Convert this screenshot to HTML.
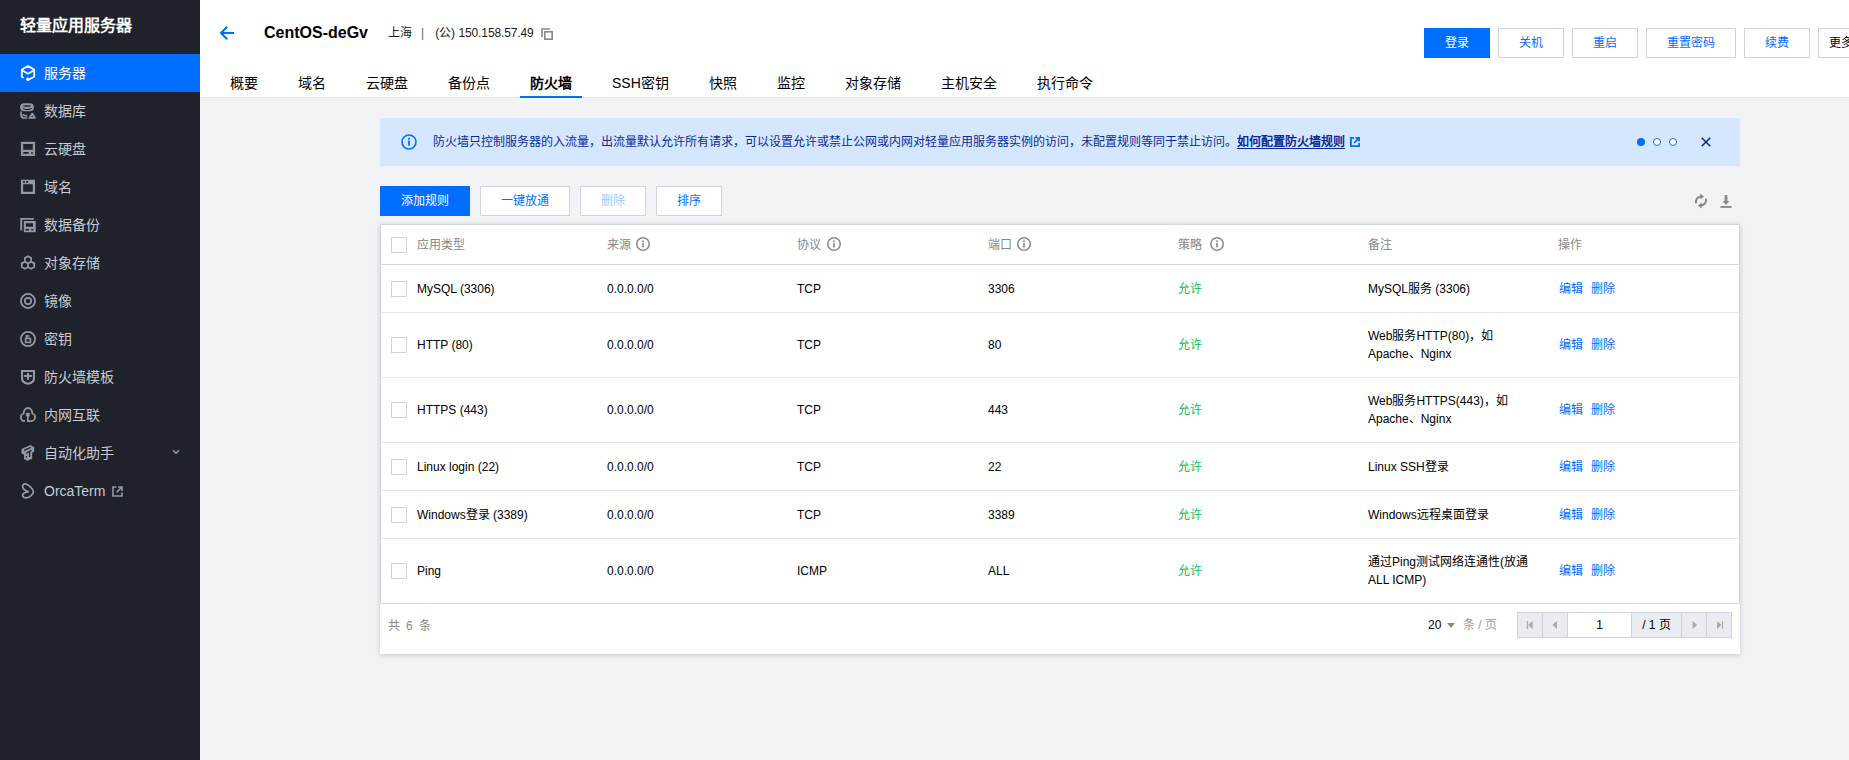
<!DOCTYPE html>
<html lang="zh-CN"><head><meta charset="utf-8">
<style>
*{box-sizing:border-box;margin:0;padding:0}
html,body{width:1849px;height:760px;overflow:hidden}
body{position:relative;background:#f2f3f7;font-family:"Liberation Sans",sans-serif;font-size:12px;color:#000}
.abs{position:absolute}
/* sidebar */
.side{position:absolute;left:0;top:0;width:200px;height:760px;background:#1f222b}
.side .ttl{position:absolute;left:20px;top:15px;font-size:16px;font-weight:bold;color:#fff;line-height:22px;white-space:nowrap}
.mi{position:absolute;left:0;width:200px;height:38px;color:#c8cbd2;font-size:14px;line-height:38px;white-space:nowrap}
.mi .ic{position:absolute;left:20px;top:11px;width:16px;height:16px}
.mi .tx{position:absolute;left:44px;top:0}
.mi.on{background:#006eff;color:#fff}
/* header */
.hdr{position:absolute;left:200px;top:0;width:1649px;height:98px;background:#fff;border-bottom:1px solid #e3e6eb}
.tabs{position:absolute;left:20px;top:72px;height:26px;padding-top:1px;white-space:nowrap;font-size:14px}
.tab{display:inline-block;padding:0 10px;margin-right:20px;height:25px;line-height:21px;vertical-align:top;color:#000;position:relative}
.tab.on{font-weight:bold}
.tab.on:after{content:"";position:absolute;left:0;right:0;bottom:0;height:2px;background:#006eff}
.btn{position:absolute;top:28px;height:30px;border:1px solid #cfd5de;background:#fff;color:#006eff;font-size:12px;line-height:28px;text-align:center;white-space:nowrap}
.btn.pri{background:#006eff;border-color:#006eff;color:#fff}
/* alert */
.alert{position:absolute;left:380px;top:118px;width:1360px;height:48px;background:#d5e7ff;color:#0a2b9c;white-space:nowrap}
/* toolbar */
.tb{position:absolute;top:186px;height:30px;border:1px solid #cfd5de;background:#fff;color:#006eff;font-size:12px;line-height:28px;text-align:center;white-space:nowrap}
.tb.pri{background:#006eff;border-color:#006eff;color:#fff}
/* table */
.card{position:absolute;left:380px;top:224px;width:1360px;height:430px;background:#fff;box-shadow:0 1px 5px 0 rgba(0,0,0,.2)}
.tbl{position:absolute;left:0;top:0;width:1360px;height:380px}
.tbd{position:absolute;left:0;top:0;width:1360px;height:380px;border:1px solid #d5dae2}
.info{position:absolute;width:14px;height:14px}
.hl.hd{background:#d5dae2}
.hl{position:absolute;left:0;width:1360px;height:1px;background:#e5e8ee}
.cb{position:absolute;left:11px;width:16px;height:16px;border:1px solid #cfd5de;background:#fff}
.cell{position:absolute;white-space:nowrap;line-height:18px}
.th{color:#888;top:9px}
.g{color:#0abf5b}
.lk{color:#006eff}
.pg{position:absolute;left:1137px;top:388px;width:215px;height:26px}
.pb{position:absolute;top:0;height:26px;background:#e9ecf1;border:1px solid #cfd5de}
.pin{position:absolute;top:0;height:26px;background:#fff;border:1px solid #cfd5de;text-align:center;line-height:24px}
</style></head><body>

<div class="side">
  <div class="ttl">轻量应用服务器</div>
  <div class="mi on" style="top:54px"><svg class="ic" viewBox="0 0 16 16"><path d="M3.6 12.7 L1.8 11.8 V4.6 L8 1 L14.2 4.6 V11.8 L8 15" fill="none" stroke="#fff" stroke-width="1.8" stroke-linejoin="round"/><path d="M2 5.3 L8 8.7 L14 5.3" fill="none" stroke="#fff" stroke-width="1.8" stroke-linejoin="round"/><circle cx="7.9" cy="14.2" r="1.8" fill="#fff"/></svg><span class="tx">服务器</span></div>
  <div class="mi" style="top:92px"><svg class="ic" viewBox="0 0 16 16"><path fill-rule="evenodd" fill="#9399a2" d="M4 0.3 H10 A3.9 4 0 0 1 10 8.3 H4 A3.9 4 0 0 1 4 0.3 Z M7 2.2 A4.2 0.8 0 1 0 7 3.8 A4.2 0.8 0 1 0 7 2.2 Z M2.5 5.1 Q7.3 6.9 12.1 5.1 Q12 6.2 10.6 6.6 Q7.3 7.6 4 6.6 Q2.6 6.2 2.5 5.1 Z"/><path d="M1.1 8.6 V12.2 Q1.1 15 4.6 15 H7.3 M2.6 11.6 Q4.4 12.8 7.3 12.8" fill="none" stroke="#9399a2" stroke-width="1.7"/><path d="M12.2 10.6 L15 14.9 H9.4 Z" fill="none" stroke="#9399a2" stroke-width="1.8" stroke-linejoin="round"/></svg><span class="tx">数据库</span></div>
  <div class="mi" style="top:130px"><svg class="ic" viewBox="0 0 16 16"><path fill-rule="evenodd" fill="#9399a2" d="M0.9 0.8 H15.1 V14.9 H0.9 Z M3.2 3.1 V8.7 H12.8 V3.1 Z M3.2 11 V12.8 H8.7 V11 Z M11.2 11 V12.8 H12.8 V11 Z"/></svg><span class="tx">云硬盘</span></div>
  <div class="mi" style="top:168px"><svg class="ic" viewBox="0 0 16 16"><path fill-rule="evenodd" fill="#9399a2" d="M0.9 0.8 H15.1 V14.9 H0.9 Z M3.2 5.2 V12.8 H12.8 V5.2 Z M3.1 2 V3.8 H4.9 V2 Z M6.2 2 V3.8 H8 V2 Z"/></svg><span class="tx">域名</span></div>
  <div class="mi" style="top:206px"><svg class="ic" viewBox="0 0 16 16"><path fill="#9399a2" d="M0.3 1 H13.8 V2.8 H2.2 V13.6 H0.3 Z"/><rect x="2.9" y="3" width="13.5" height="13" fill="#1f222b"/><path fill-rule="evenodd" fill="#9399a2" d="M3.8 3.9 H15.7 V15.2 H3.8 Z M5.8 6.3 V9.7 H13 V6.3 Z M5.4 12 V13.5 H9.1 V12 Z M11.3 12 V13.5 H13.3 V12 Z"/></svg><span class="tx">数据备份</span></div>
  <div class="mi" style="top:244px"><svg class="ic" viewBox="0 0 16 16"><path d="M8.00 1.20 L11.12 3.00 L11.12 6.60 L8.00 8.40 L4.88 6.60 L4.88 3.00 Z M4.88 6.60 L8.00 8.40 L8.00 12.00 L4.88 13.80 L1.76 12.00 L1.76 8.40 Z M11.12 6.60 L14.24 8.40 L14.24 12.00 L11.12 13.80 L8.00 12.00 L8.00 8.40 Z" fill="none" stroke="#9399a2" stroke-width="1.8" stroke-linejoin="round"/></svg><span class="tx">对象存储</span></div>
  <div class="mi" style="top:282px"><svg class="ic" viewBox="0 0 16 16"><circle cx="8" cy="8" r="7.05" fill="none" stroke="#9399a2" stroke-width="1.8"/><circle cx="8" cy="8" r="3.2" fill="none" stroke="#9399a2" stroke-width="1.7"/></svg><span class="tx">镜像</span></div>
  <div class="mi" style="top:320px"><svg class="ic" viewBox="0 0 16 16"><circle cx="8" cy="8" r="7.1" fill="none" stroke="#9399a2" stroke-width="1.8"/><rect x="5.8" y="4.2" width="1.7" height="3.2" fill="#9399a2"/><rect x="5.8" y="4.2" width="3.8" height="1.5" fill="#9399a2"/><rect x="5.6" y="7.4" width="4.8" height="4" fill="none" stroke="#9399a2" stroke-width="1.6"/></svg><span class="tx">密钥</span></div>
  <div class="mi" style="top:358px"><svg class="ic" viewBox="0 0 16 16"><path d="M2 2 H14 V9.3 C14 12.3 11.2 14.2 8 14.8 C4.8 14.2 2 12.3 2 9.3 Z" fill="none" stroke="#9399a2" stroke-width="2.1"/><rect x="3.9" y="6" width="8.1" height="1.9" fill="#9399a2"/><rect x="6.9" y="3.9" width="2.2" height="6.8" fill="#9399a2"/></svg><span class="tx">防火墙模板</span></div>
  <div class="mi" style="top:396px"><svg class="ic" viewBox="0 0 16 16"><path d="M5 14.1 C2.5 14 0.9 12.3 0.9 10.2 C0.9 8.4 2 7 3.6 6.5 C3.8 3.4 5.7 1 8 1 C10.3 1 12.2 3.4 12.4 6.5 C14 7 15.1 8.4 15.1 10.2 C15.1 12.3 13.4 14.1 11.2 14.1 H7.85 V9" fill="none" stroke="#9399a2" stroke-width="1.8"/><rect x="6" y="5.8" width="3.7" height="3.6" fill="#9399a2"/></svg><span class="tx">内网互联</span></div>
  <div class="mi" style="top:434px"><svg class="ic" viewBox="0 0 16 16"><path d="M1.5 4 L10.4 0 L14.2 2.2 V6.5 L12.2 7.7 V13.8 L7.5 15.8 L4 14 V9.7 L1.5 8.6 Z" fill="#9399a2"/><path d="M4.2 5.4 L10.7 2.4 M6.1 8.3 L11.6 5.4 M9.6 6.6 V12 M6.4 10.9 V12.6" fill="none" stroke="#1f222b" stroke-width="1.2"/></svg><span class="tx">自动化助手</span><svg class="abs" style="left:172px;top:15px;width:8px;height:6px" viewBox="0 0 8 6"><path d="M1 1.2 L4 4.2 L7 1.2" fill="none" stroke="#9aa0a8" stroke-width="1.4"/></svg></div>
  <div class="mi" style="top:472px"><svg class="ic" viewBox="0 0 16 16"><path d="M9 9 C6 8 2.6 6.5 2.6 3.6 C2.6 1.6 4.2 0.8 5.6 0.9 C8 1.2 13.4 6 13.4 8.8 C13.4 11.2 9.6 14.6 6.4 14.8 C4.2 15 2.6 14 2.6 12.2 C2.6 10.2 5 9.2 8.6 8.8" fill="none" stroke="#9399a2" stroke-width="1.8"/></svg><span class="tx">OrcaTerm</span><svg class="abs" style="left:112px;top:14px;width:11px;height:11px" viewBox="0 0 11 11"><path d="M4.5 1 H1 V10 H10 V6.5" fill="none" stroke="#9399a2" stroke-width="1.6"/><path d="M6 1 H10 V5 M10 1 L4.6 6.4" fill="none" stroke="#9399a2" stroke-width="1.6"/></svg></div>
</div>

<div class="hdr">
  <svg class="abs" style="left:19px;top:25px;width:16px;height:16px" viewBox="0 0 16 16"><path d="M8.2 1.8 L2 8 L8.2 14.2 M2.2 8 H15" fill="none" stroke="#006eff" stroke-width="2"/></svg>
  <div class="abs" style="left:64px;top:23px;font-size:16px;font-weight:bold;line-height:20px">CentOS-deGv</div>
  <svg class="abs" style="left:341px;top:28px;width:12px;height:12px" viewBox="0 0 12 12"><path d="M1 9 V1 H9" fill="none" stroke="#888" stroke-width="1.6"/><rect x="3.8" y="3.8" width="7.4" height="7.4" fill="none" stroke="#888" stroke-width="1.6"/></svg>
  <div class="abs" style="left:188px;top:25px;font-size:12px;line-height:16px;color:#1a1a1a">上海<span style="margin:0 11px 0 9px;color:#666">|</span>(公) <span style="letter-spacing:-0.12px">150.158.57.49</span></div>
  <div class="tabs">
    <span class="tab">概要</span><span class="tab">域名</span><span class="tab">云硬盘</span><span class="tab">备份点</span><span class="tab on">防火墙</span><span class="tab">SSH密钥</span><span class="tab">快照</span><span class="tab">监控</span><span class="tab">对象存储</span><span class="tab">主机安全</span><span class="tab">执行命令</span>
  </div>
</div>
<div class="btn pri" style="left:1424px;width:66px">登录</div>
<div class="btn" style="left:1498px;width:66px">关机</div>
<div class="btn" style="left:1572px;width:66px">重启</div>
<div class="btn" style="left:1646px;width:90px">重置密码</div>
<div class="btn" style="left:1744px;width:66px">续费</div>
<div class="btn" style="left:1818px;width:80px;color:#000;text-align:left;padding-left:10px">更多</div>

<div class="alert">
  <div class="abs" style="left:53px;top:15px;line-height:18px">防火墙只控制服务器的入流量，出流量默认允许所有请求，可以设置允许或禁止公网或内网对轻量应用服务器实例的访问，未配置规则等同于禁止访问。<b style="text-decoration:underline;text-underline-offset:2px">如何配置防火墙规则</b></div>
  <svg class="abs" style="left:21px;top:16px;width:16px;height:16px" viewBox="0 0 16 16"><circle cx="8" cy="8" r="7" fill="none" stroke="#006eff" stroke-width="1.6"/><rect x="7.1" y="6.6" width="1.8" height="5" fill="#006eff"/><rect x="7.1" y="3.8" width="1.8" height="1.8" fill="#006eff"/></svg>
  <svg class="abs" style="left:970px;top:19px;width:10px;height:10px" viewBox="0 0 10 10"><path d="M4 0.9 H0.9 V9.1 H9.1 V6" fill="none" stroke="#006eff" stroke-width="1.8"/><path d="M5.5 0.9 H9.1 V4.5 M9.1 0.9 L4.2 5.8" fill="none" stroke="#006eff" stroke-width="1.8"/></svg>
  <div class="abs" style="left:1257px;top:20px;width:8px;height:8px;border-radius:50%;background:#006eff"></div>
  <div class="abs" style="left:1273px;top:20px;width:8px;height:8px;border-radius:50%;background:#fff;border:1px solid #006eff"></div>
  <div class="abs" style="left:1289px;top:20px;width:8px;height:8px;border-radius:50%;background:#fff;border:1px solid #006eff"></div>
  <svg class="abs" style="left:1321px;top:19px;width:10px;height:10px" viewBox="0 0 10 10"><path d="M0.7 0.7 L9.3 9.3 M9.3 0.7 L0.7 9.3" fill="none" stroke="#002a8c" stroke-width="1.5"/></svg>
</div>

<div class="tb pri" style="left:380px;width:90px">添加规则</div>
<div class="tb" style="left:480px;width:90px">一键放通</div>
<div class="tb" style="left:580px;width:66px;color:#a3c7ff">删除</div>
<div class="tb" style="left:656px;width:66px">排序</div>
<svg class="abs" style="left:1694px;top:193px;width:14px;height:16px" viewBox="0 0 14 16"><path d="M2.2 10.4 C1.2 7.2 3.2 3.8 7.2 3.6" fill="none" stroke="#888" stroke-width="2"/><path d="M6.4 0.6 L10 3.6 L6.4 6.6 Z" fill="#888"/><path d="M11.8 5.6 C12.8 8.8 10.8 12.2 6.8 12.4" fill="none" stroke="#888" stroke-width="2"/><path d="M7.6 9.4 L4 12.4 L7.6 15.4 Z" fill="#888"/></svg>
<svg class="abs" style="left:1720px;top:194px;width:12px;height:14px" viewBox="0 0 12 14"><rect x="4.6" y="1" width="2.8" height="6.5" fill="#888"/><path d="M2.6 7 H9.4 L6 11 Z" fill="#888"/><rect x="0.5" y="12" width="11" height="1.9" fill="#888"/></svg>

<div class="card">
<div class="tbl">
<div class="cb" style="top:13px"></div>
<div class="cell th" style="left:37px;top:11.5px">应用类型</div>
<div class="cell th" style="left:227px;top:11.5px">来源</div>
<svg class="info" style="left:256px;top:13px" viewBox="0 0 14 14"><circle cx="7" cy="7" r="6.25" fill="none" stroke="#888" stroke-width="1.5"/><rect x="6.2" y="5.8" width="1.6" height="4.6" fill="#888"/><rect x="6.2" y="3.4" width="1.6" height="1.6" fill="#888"/></svg>
<div class="cell th" style="left:417px;top:11.5px">协议</div>
<svg class="info" style="left:447px;top:13px" viewBox="0 0 14 14"><circle cx="7" cy="7" r="6.25" fill="none" stroke="#888" stroke-width="1.5"/><rect x="6.2" y="5.8" width="1.6" height="4.6" fill="#888"/><rect x="6.2" y="3.4" width="1.6" height="1.6" fill="#888"/></svg>
<div class="cell th" style="left:608px;top:11.5px">端口</div>
<svg class="info" style="left:637px;top:13px" viewBox="0 0 14 14"><circle cx="7" cy="7" r="6.25" fill="none" stroke="#888" stroke-width="1.5"/><rect x="6.2" y="5.8" width="1.6" height="4.6" fill="#888"/><rect x="6.2" y="3.4" width="1.6" height="1.6" fill="#888"/></svg>
<div class="cell th" style="left:798px;top:11.5px">策略</div>
<svg class="info" style="left:830px;top:13px" viewBox="0 0 14 14"><circle cx="7" cy="7" r="6.25" fill="none" stroke="#888" stroke-width="1.5"/><rect x="6.2" y="5.8" width="1.6" height="4.6" fill="#888"/><rect x="6.2" y="3.4" width="1.6" height="1.6" fill="#888"/></svg>
<div class="cell th" style="left:988px;top:11.5px">备注</div>
<div class="cell th" style="left:1178px;top:11.5px">操作</div>
<div class="hl hd" style="top:40px"></div>
<div class="hl" style="top:88px"></div>
<div class="hl" style="top:153px"></div>
<div class="hl" style="top:218px"></div>
<div class="hl" style="top:266px"></div>
<div class="hl" style="top:314px"></div>
<div class="cb" style="top:57px"></div>
<div class="cell" style="left:37px;top:56px">MySQL (3306)</div>
<div class="cell" style="left:227px;top:56px">0.0.0.0/0</div>
<div class="cell" style="left:417px;top:56px">TCP</div>
<div class="cell" style="left:608px;top:56px">3306</div>
<div class="cell g" style="left:798px;top:56px">允许</div>
<div class="cell" style="left:988px;top:56px">MySQL服务 (3306)</div>
<div class="cell lk" style="left:1179px;top:56px">编辑</div>
<div class="cell lk" style="left:1211px;top:56px">删除</div>
<div class="cb" style="top:113px"></div>
<div class="cell" style="left:37px;top:112px">HTTP (80)</div>
<div class="cell" style="left:227px;top:112px">0.0.0.0/0</div>
<div class="cell" style="left:417px;top:112px">TCP</div>
<div class="cell" style="left:608px;top:112px">80</div>
<div class="cell g" style="left:798px;top:112px">允许</div>
<div class="cell" style="left:988px;top:103px">Web服务HTTP(80)，如<br>Apache、Nginx</div>
<div class="cell lk" style="left:1179px;top:112px">编辑</div>
<div class="cell lk" style="left:1211px;top:112px">删除</div>
<div class="cb" style="top:178px"></div>
<div class="cell" style="left:37px;top:177px">HTTPS (443)</div>
<div class="cell" style="left:227px;top:177px">0.0.0.0/0</div>
<div class="cell" style="left:417px;top:177px">TCP</div>
<div class="cell" style="left:608px;top:177px">443</div>
<div class="cell g" style="left:798px;top:177px">允许</div>
<div class="cell" style="left:988px;top:168px">Web服务HTTPS(443)，如<br>Apache、Nginx</div>
<div class="cell lk" style="left:1179px;top:177px">编辑</div>
<div class="cell lk" style="left:1211px;top:177px">删除</div>
<div class="cb" style="top:235px"></div>
<div class="cell" style="left:37px;top:234px">Linux login (22)</div>
<div class="cell" style="left:227px;top:234px">0.0.0.0/0</div>
<div class="cell" style="left:417px;top:234px">TCP</div>
<div class="cell" style="left:608px;top:234px">22</div>
<div class="cell g" style="left:798px;top:234px">允许</div>
<div class="cell" style="left:988px;top:234px">Linux SSH登录</div>
<div class="cell lk" style="left:1179px;top:234px">编辑</div>
<div class="cell lk" style="left:1211px;top:234px">删除</div>
<div class="cb" style="top:283px"></div>
<div class="cell" style="left:37px;top:282px">Windows登录 (3389)</div>
<div class="cell" style="left:227px;top:282px">0.0.0.0/0</div>
<div class="cell" style="left:417px;top:282px">TCP</div>
<div class="cell" style="left:608px;top:282px">3389</div>
<div class="cell g" style="left:798px;top:282px">允许</div>
<div class="cell" style="left:988px;top:282px">Windows远程桌面登录</div>
<div class="cell lk" style="left:1179px;top:282px">编辑</div>
<div class="cell lk" style="left:1211px;top:282px">删除</div>
<div class="cb" style="top:339px"></div>
<div class="cell" style="left:37px;top:338px">Ping</div>
<div class="cell" style="left:227px;top:338px">0.0.0.0/0</div>
<div class="cell" style="left:417px;top:338px">ICMP</div>
<div class="cell" style="left:608px;top:338px">ALL</div>
<div class="cell g" style="left:798px;top:338px">允许</div>
<div class="cell" style="left:988px;top:329px">通过Ping测试网络连通性(放通<br>ALL ICMP)</div>
<div class="cell lk" style="left:1179px;top:338px">编辑</div>
<div class="cell lk" style="left:1211px;top:338px">删除</div>
</div>
<div class="tbd"></div>
<div class="cell" style="left:8px;top:393px;color:#888">共<span style="margin:0 6px">6</span>条</div>
<div class="cell" style="left:1048px;top:392px">20</div>
<svg class="abs" style="left:1067px;top:399px;width:8px;height:5px" viewBox="0 0 8 5"><path d="M0 0 H8 L4 5 Z" fill="#888"/></svg>
<div class="cell" style="left:1083px;top:392px;color:#999">条 / 页</div>
<div class="pg">
  <div class="pb" style="left:0;width:26px"><svg style="position:absolute;left:8px;top:7px;width:8px;height:10px" viewBox="0 0 8 10"><rect x="0.9" y="1" width="1.2" height="8" fill="#aaa"/><path d="M6.6 1 V9 L2.2 5 Z" fill="#aaa"/></svg></div>
  <div class="pb" style="left:25px;width:26px"><svg style="position:absolute;left:8px;top:7px;width:8px;height:10px" viewBox="0 0 8 10"><path d="M6 1 V9 L1.4 5 Z" fill="#aaa"/></svg></div>
  <div class="pin" style="left:50px;width:65px">1</div>
  <div class="pb" style="left:114px;width:51px;color:#000;line-height:24px;text-align:center">/ 1 页</div>
  <div class="pb" style="left:164px;width:26px"><svg style="position:absolute;left:9px;top:7px;width:8px;height:10px" viewBox="0 0 8 10"><path d="M1.6 1 V9 L6.2 5 Z" fill="#aaa"/></svg></div>
  <div class="pb" style="left:189px;width:26px"><svg style="position:absolute;left:9px;top:7px;width:8px;height:10px" viewBox="0 0 8 10"><path d="M1 1 V9 L5.4 5 Z" fill="#aaa"/><rect x="5.9" y="1" width="1.2" height="8" fill="#aaa"/></svg></div>
</div>
</div>
</div>

</body></html>
